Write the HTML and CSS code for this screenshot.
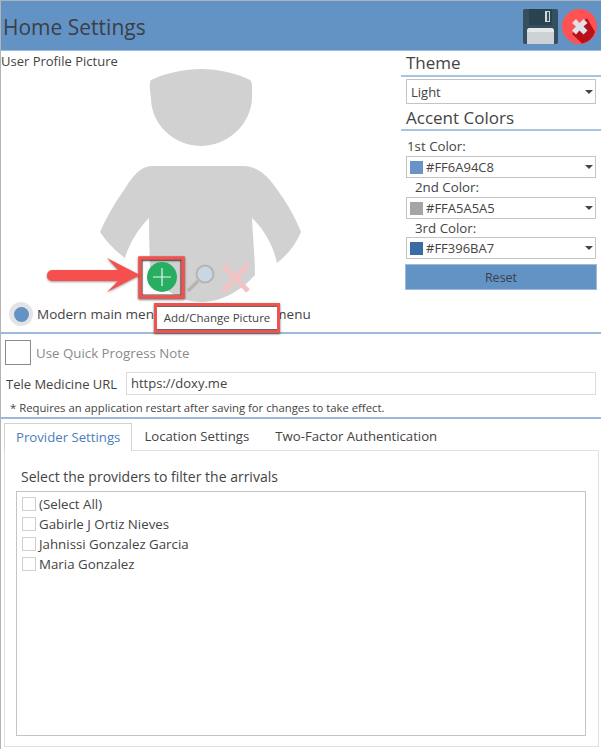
FILE: index.html
```html
<!DOCTYPE html>
<html lang="en">
<head>
<meta charset="utf-8">
<title>Home Settings</title>
<link rel="stylesheet" href="styles.css">
</head>
<body>
<div class="window">
  <header class="titlebar">
    <h1 class="title">Home Settings</h1>
    <div class="title-actions">
      <svg class="icon-save" width="35" height="35" viewBox="0 0 35 35">
        <rect width="35" height="35" rx="2" fill="#34505f"/>
        <rect x="6" y="0" width="23" height="16" fill="#2a4350"/>
        <rect x="22" y="2" width="5" height="11" fill="#cfd8dc"/>
        <rect x="24" y="3" width="2" height="9" fill="#34505f"/>
        <path d="M4 35V22q0-3 3-3h21q3 0 3 3v13z" fill="#cdd2d4"/>
        <path d="M4 23q0-4 3-4h21q3 0 3 4z" fill="#e6e9ea"/>
      </svg>
      <svg class="icon-close" width="35" height="35" viewBox="0 0 35 35">
        <circle cx="17.5" cy="17.5" r="17.5" fill="#ff5252"/>
        <path d="M25 9l8 14a17.500 17.500 0 0 1-13 11.500L10 25z" fill="#b9111b"/>
        <path d="M10 14l4-4 3.500 4 4-4 4 4-4 3.500 4 4-4 4-4-4-3.500 4-4-4 4-4z" fill="#dfe3e8"/>
      </svg>
    </div>
  </header>

  <section class="top">
    <div class="profile">
      <div class="profile-label">User Profile Picture</div>
      <div class="menu-row">
        <span class="radio"><span class="radio-dot"></span></span>
        <span class="menu-text">Modern main menu</span>
        <span class="menu-text menu-alt">Classic main menu</span>
      </div>
      <svg class="canvas" width="320" height="290" viewBox="0 0 320 290">
        <g transform="translate(-1 -51)">
          <path d="M151 80C166 73 184 69 201 69S236 73 250 80C253 82 252 92 252 98C251 126 226 146 201 146S151 126 151 98C150 92 149 82 151 80Z" fill="#d1d1d1"/>
          <path d="M153 166H243C262 166 272 182 283 198C291 210 297 222 301 232C295 246 287 255 277 263C273 245 264 229 252 218C253 240 255 258 255 275C240 292 220 302 201 302S166 292 150 275C150 258 149 240 149 218C138 229 129 244 125 258C114 250 106 241 100 232C106 218 114 204 124 190C133 176 140 166 153 166Z" fill="#d1d1d1"/>
          <rect class="highlight-inner" x="142" y="260" width="39" height="35"/>
          <rect class="highlight" x="140" y="258" width="43" height="39"/>
          <path d="M47 275.500a5 5 0 0 1 5-5.500H118L107 258L140 275L107 292L118 281H52a5 5 0 0 1-5-5.500Z" class="arrow"/>
          <circle cx="162" cy="277" r="15" fill="#27ae60"/>
          <path d="M162 268v18M153 277h18" stroke="#e8f5ee" stroke-width="1.200"/>
          <circle cx="205" cy="274" r="8.500" fill="#c9d7e3" stroke="#b4b4b4" stroke-width="2"/>
          <path d="M198 281L188 291" stroke="#b4b4b4" stroke-width="3.500"/>
          <path d="M223 265L248 291M248 265L223 291" stroke="#f3c3c3" stroke-width="5"/>
        </g>
      </svg>
      <div class="tooltip">Add/Change Picture</div>
    </div>
    <aside class="theme">
      <h2 class="theme-heading">Theme</h2>
      <div class="select select-theme">Light<span class="caret"></span></div>
      <h2 class="theme-heading accent-heading">Accent Colors</h2>
      <div class="color-label first-label">1st Color:</div>
      <div class="select"><span class="swatch swatch-1"></span>#FF6A94C8<span class="caret"></span></div>
      <div class="color-label">2nd Color:</div>
      <div class="select"><span class="swatch swatch-2"></span>#FFA5A5A5<span class="caret"></span></div>
      <div class="color-label third-label">3rd Color:</div>
      <div class="select"><span class="swatch swatch-3"></span>#FF396BA7<span class="caret"></span></div>
      <button class="reset" type="button">Reset</button>
    </aside>
  </section>

  <section class="options">
    <div class="quick-row">
      <span class="big-check"></span>
      <span class="quick-text">Use Quick Progress Note</span>
    </div>
    <div class="url-row">
      <label class="url-label">Tele Medicine URL</label>
      <div class="url-input">https://doxy.me</div>
    </div>
    <div class="note">* Requires an application restart after saving for changes to take effect.</div>
  </section>

  <section class="tabs-area">
    <div class="tabs">
      <div class="tab tab-active">Provider Settings</div>
      <div class="tab">Location Settings</div>
      <div class="tab">Two-Factor Authentication</div>
    </div>
    <div class="tab-panel">
      <div class="panel-label">Select the providers to filter the arrivals</div>
      <ul class="listbox">
        <li class="list-item"><span class="check"></span>(Select All)</li>
        <li class="list-item"><span class="check"></span>Gabirle J Ortiz Nieves</li>
        <li class="list-item"><span class="check"></span>Jahnissi Gonzalez Garcia</li>
        <li class="list-item"><span class="check"></span>Maria Gonzalez</li>
      </ul>
    </div>
  </section>
</div>
</body>
</html>
```
FILE: styles.css
```css
* { box-sizing: border-box; }
html, body { margin: 0; padding: 0; background: #fff; }
body {
  width: 601px;
  height: 749px;
  overflow: hidden;
  font-family: "Open Sans", "Noto Sans", sans-serif;
  color: #444;
}
.window {
  width: 601px;
  height: 749px;
  border-left: 1px solid #b4b4b4;
  border-top: 1px solid #a9b4c0;
  display: flex;
  flex-direction: column;
}
.titlebar {
  height: 50px;
  flex: none;
  background: #6393c5;
  display: flex;
  align-items: center;
  justify-content: space-between;
  padding: 2px 4px 0 2px;
  border-bottom: 1px solid #9dbbdb;
}
.title {
  margin: 0;
  font-size: 21px;
  font-weight: 400;
  color: #3a3f48;
}
.title-actions { display: flex; gap: 4px; align-items: center; margin-top: -1px; }
.icon-save, .icon-close { display: block; }

.top {
  height: 283px;
  flex: none;
  display: flex;
  border-bottom: 2px solid #9db8da;
}
.profile {
  position: relative;
  width: 400px;
  flex: none;
  display: flex;
  flex-direction: column;
  justify-content: space-between;
}
.profile-label { font-size: 13px; margin-top: 1px; }
.menu-row {
  display: flex;
  align-items: center;
  padding-left: 8px;
  margin-bottom: 6px;
  font-size: 13.500px;
  position: relative;
  z-index: 1;
}
.radio {
  width: 24px;
  height: 24px;
  border-radius: 50%;
  background: #e4e4e4;
  display: flex;
  align-items: center;
  justify-content: center;
  margin-right: 4px;
}
.radio-dot { width: 15px; height: 15px; border-radius: 50%; background: #6393c5; }
.menu-alt { margin-left: 31px; }
.menu-text { white-space: nowrap; }
.canvas { position: absolute; left: 0; top: 0; z-index: 2; }
.highlight {
  fill: none;
  stroke: #ef5350;
  stroke-width: 3.500;
  filter: drop-shadow(0 1px 1px rgba(0,0,0,.6));
}
.highlight-inner { fill: none; stroke: #555; stroke-width: 1; }
.arrow { fill: #f5504e; filter: drop-shadow(0 1px 1px rgba(0,0,0,.4)); }
.tooltip {
  position: absolute;
  z-index: 3;
  left: 153px;
  top: 252px;
  width: 126px;
  height: 30px;
  background: #fff;
  border: 3px solid #ef5350;
  box-shadow: 0 1px 2px rgba(0,0,0,.6), inset 0 1px 0 #666, inset 0 -1px 0 #666;
  font-size: 11.500px;
  line-height: 24px;
  text-align: center;
  white-space: nowrap;
}

.theme {
  flex: 1;
  padding: 0 5px 0 5px;
  display: flex;
  flex-direction: column;
  align-items: stretch;
}
.theme-heading {
  margin: 0 -5px 2px;
  padding: 0 5px;
  height: 26px;
  font-size: 17px;
  line-height: 24px;
  font-weight: 400;
  border-bottom: 2px solid #a8c4e0;
}
.accent-heading { margin-top: 1px; line-height: 26px; }
.select {
  position: relative;
  height: 22px;
  border: 1px solid #c4c4c4;
  display: flex;
  align-items: center;
  padding-left: 3px;
  font-size: 13px;
}
.select-theme { height: 25px; padding-left: 4px; }
.caret {
  position: absolute;
  right: 2px;
  top: 50%;
  margin-top: -2px;
  border-left: 4px solid transparent;
  border-right: 4px solid transparent;
  border-top: 4px solid #444;
}
.swatch { width: 13px; height: 13px; margin-right: 3px; flex: none; }
.swatch-1 { background: #6a94c8; }
.swatch-2 { background: #a5a5a5; }
.swatch-3 { background: #396ba7; }
.color-label {
  font-size: 13.300px;
  line-height: 19px;
  padding-left: 9px;
  height: 19px;
}
.third-label { height: 18px; }
.first-label { padding-left: 1px; margin-top: 5px; height: 18px; line-height: 17px; }
.reset {
  margin: 5px -1px 0;
  height: 26px;
  background: #6393c5;
  border: 1px solid #9dbbdb;
  font: inherit;
  font-size: 12.500px;
  color: #3a3f48;
  padding: 0;
}

.options {
  height: 85px;
  flex: none;
  border-bottom: 2px solid #9db8da;
  padding: 5px 4px 0 4px;
}
.quick-row { display: flex; align-items: center; height: 26px; }
.big-check {
  width: 26px;
  height: 25px;
  border: 1px solid #8a8a8a;
  margin-right: 5px;
}
.quick-text { font-size: 13.300px; color: #8a8a8a; padding-top: 1px; }
.url-row { display: flex; align-items: center; margin-top: 7px; height: 23px; }
.url-label { font-size: 13px; width: 121px; padding-left: 1px; white-space: nowrap; }
.url-input {
  width: 470px;
  height: 23px;
  border: 1px solid #dcdcdc;
  font-size: 13px;
  line-height: 21px;
  padding-left: 4px;
}
.note { font-size: 11.300px; margin-top: 5px; padding-left: 5px; white-space: nowrap; }

.tabs-area { flex: 1; padding: 4px 2px 2px 3px; display: flex; flex-direction: column; min-height: 0; }
.tabs { display: flex; height: 27px; flex: none; }
.tab {
  font-size: 13.200px;
  line-height: 27px;
  padding: 0 12px;
  white-space: nowrap;
}
.tab + .tab + .tab { padding-left: 14px; }
.tab-active {
  color: #4a7ebb;
  border: 1px solid #d2d2d2;
  border-bottom: 0;
  background: #fff;
  margin-bottom: -1px;
  padding: 0 11px;
  position: relative;
  z-index: 1;
  height: 28px;
}
.tab-panel {
  flex: 1;
  border: 1px solid #e0e0e0;
  padding: 16px 12px 10px 11px;
  display: flex;
  flex-direction: column;
  min-height: 0;
}
.panel-label { font-size: 14px; line-height: 20px; padding-left: 5px; margin-bottom: 4px; }
.listbox {
  flex: 1;
  margin: 0;
  padding: 2px 0 0 5px;
  list-style: none;
  border: 1px solid #c4c4c4;
}
.list-item {
  display: flex;
  align-items: center;
  height: 20px;
  font-size: 13.300px;
}
.check {
  width: 14px;
  height: 14px;
  border: 1px solid #cfcfcf;
  margin-right: 3px;
  flex: none;
}
```
